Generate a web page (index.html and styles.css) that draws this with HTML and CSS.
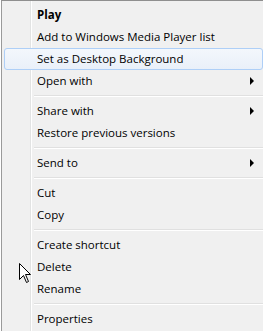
FILE: index.html
```html
<!DOCTYPE html>
<html lang="en">
<head>
  <meta charset="UTF-8" />
  <title>Context Menu</title>
  <link rel="stylesheet" href="styles.css">
</head>
<body>
  <div class="menu">
    <div class="item bold">Play</div>
    <div class="item">Add to Windows Media Player list</div>
    <div class="item hover">Set as Desktop Background</div>
    <div class="item sub">Open with</div>
    <div class="sep"></div>
    <div class="item sub">Share with</div>
    <div class="item">Restore previous versions</div>
    <div class="sep"></div>
    <div class="item sub">Send to</div>
    <div class="sep"></div>
    <div class="item">Cut</div>
    <div class="item">Copy</div>
    <div class="sep"></div>
    <div class="item">Create shortcut</div>
    <div class="item">Delete</div>
    <div class="item">Rename</div>
    <div class="sep"></div>
    <div class="item">Properties</div>

    <svg class="cursor" width="13" height="21" viewBox="0 0 13 21">
      <path d="M0.5 0.5 L0.5 16.5 L4.5 12.5 L7.5 19.5 L9.5 18.5 L6.5 11.5 L11.5 11.5 Z" fill="#fff" stroke="#000" stroke-width="1"/>
    </svg>
  </div>
</body>
</html>
```

FILE: styles.css
```css
body {
  margin: 0;
  background: #fff;
  font-family: "Open Sans", "Noto Sans", sans-serif;
  font-size: 11.5px;
}
.menu {
  position: relative;
  width: 262px;
  height: 331px;
  margin-left: 1px;
  border-top: 1px solid #8f8f8f;
  border-left: 1px solid #9a9a9a;
  background: #f0f0f0;
  box-sizing: border-box;
  padding: 3px 0 0 2px;
  background-image: linear-gradient(to right, transparent 28px, #e2e3e3 28px, #e2e3e3 29px, #fff 29px, #fff 30px, transparent 30px);
}
.item {
  position: relative;
  height: 22px;
  line-height: 20px;
  padding-left: 32px;
  border: 1px solid transparent;
  box-sizing: border-box;
  color: #000;
}
.bold {
  font-weight: bold;
}
.hover {
  border-color: #aecff7;
  border-radius: 3px;
  background: linear-gradient(to bottom, #f3f7fc, #e9f0f9);
}
.sub::after {
  content: "";
  position: absolute;
  right: 8px;
  top: 6px;
  border-left: 4px solid #000;
  border-top: 4px solid transparent;
  border-bottom: 4px solid transparent;
}
.sep {
  height: 1px;
  margin: 3px 0 3px 30px;
  border-top: 1px solid #e0e0e0;
  background: #fff;
}
.cursor {
  position: absolute;
  left: 17px;
  top: 262px;
}
```
